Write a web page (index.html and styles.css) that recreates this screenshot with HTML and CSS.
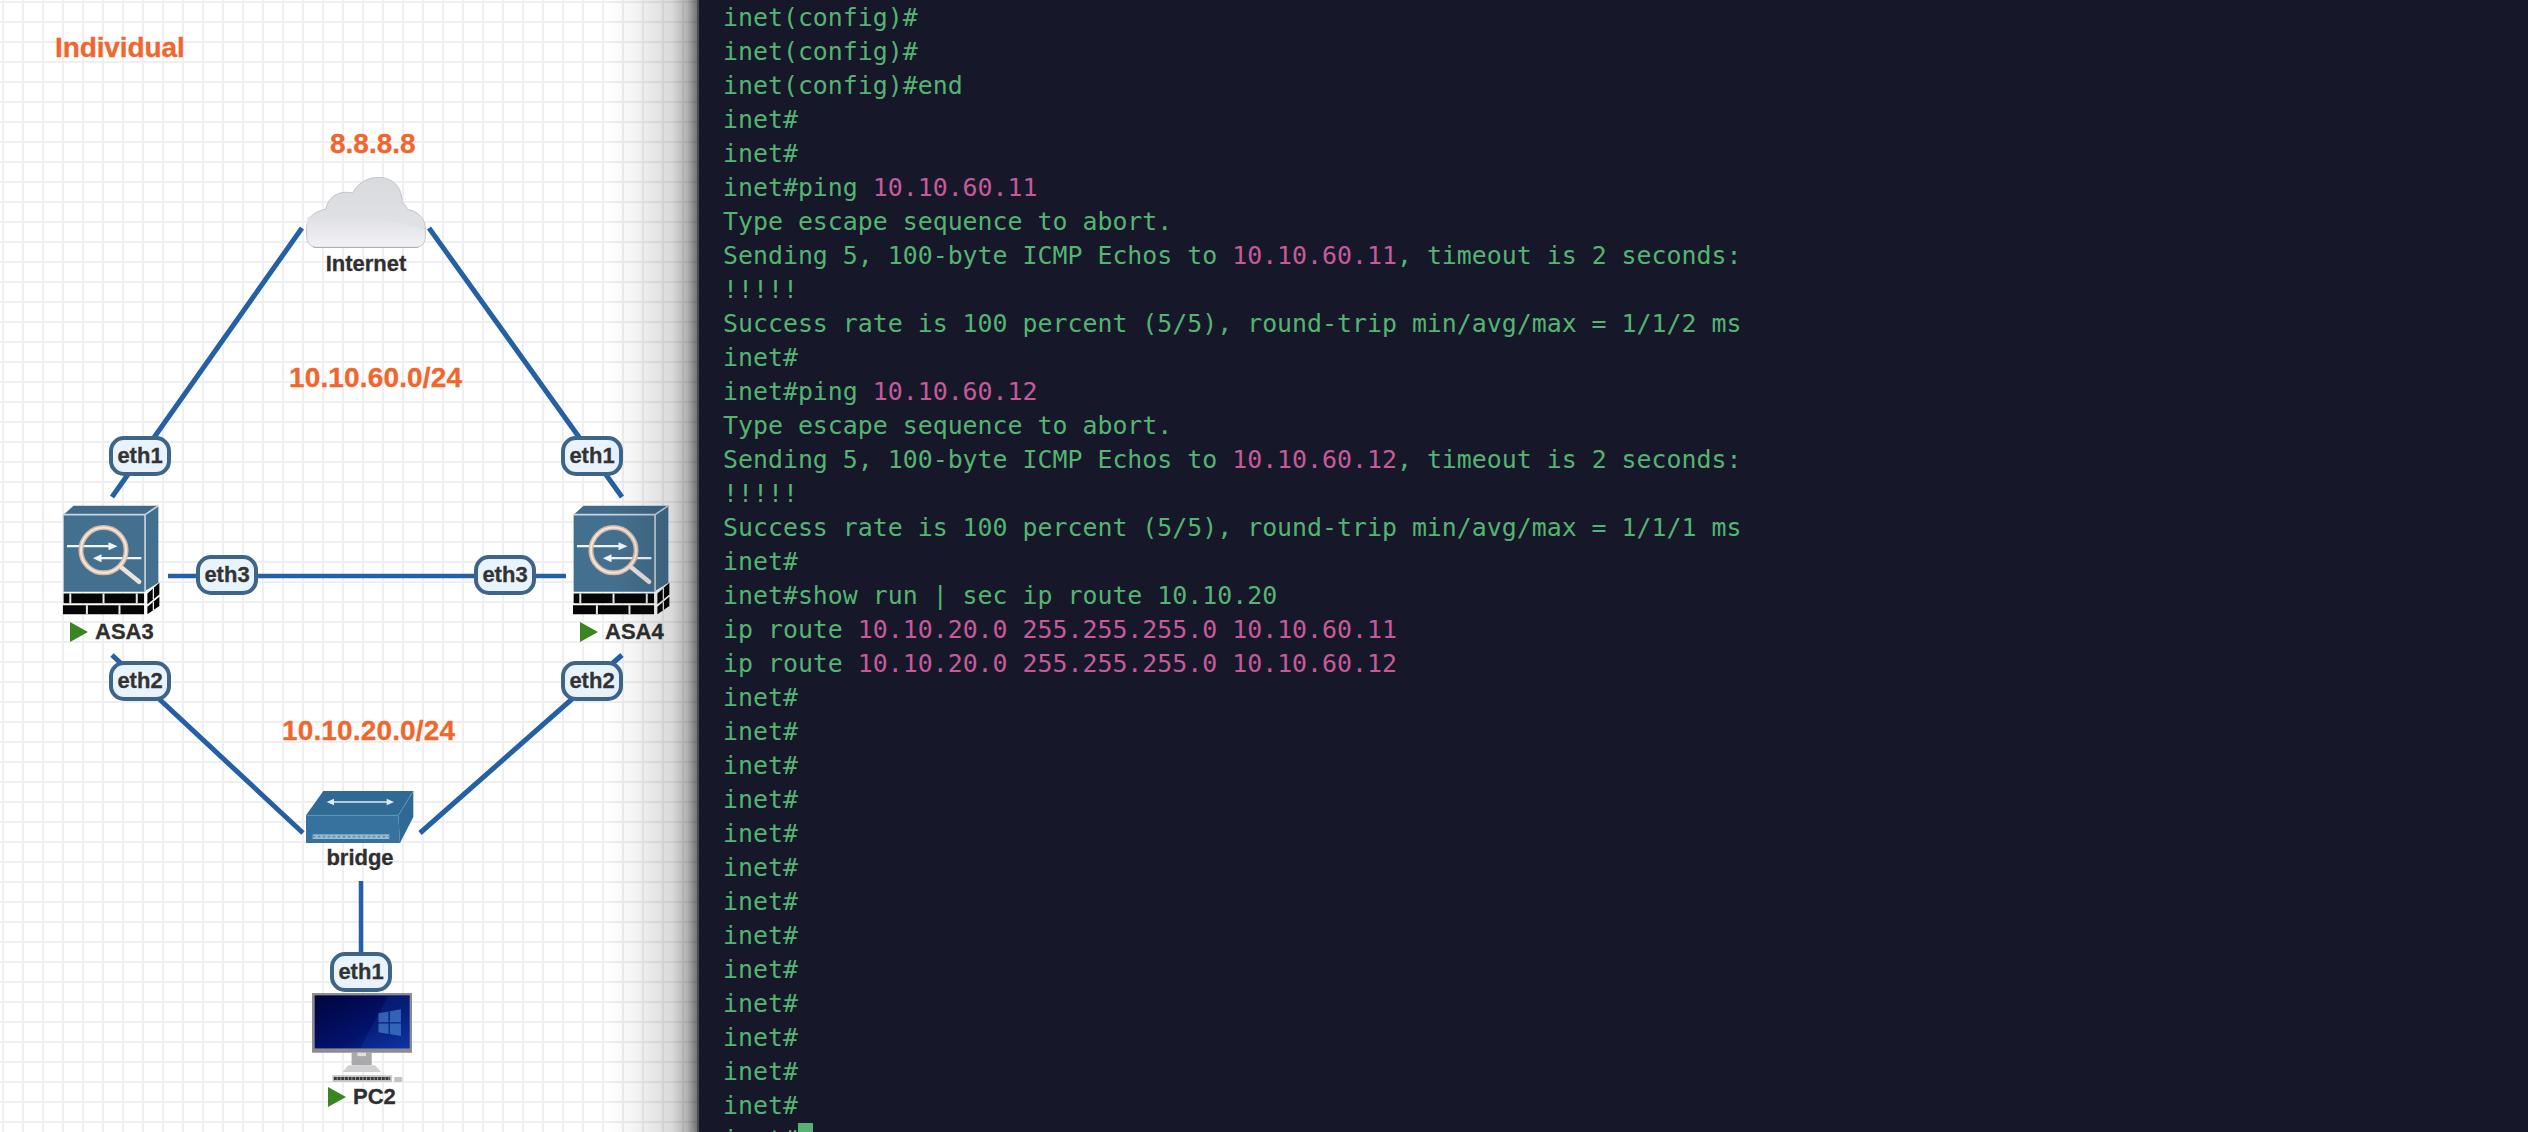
FILE: index.html
```html
<!DOCTYPE html>
<html lang="en">
<head>
<meta charset="utf-8">
<title>Individual</title>
<link rel="stylesheet" href="styles.css">
</head>
<body>
<main class="workspace">
  <section class="canvas">
    <svg class="defs" width="0" height="0" aria-hidden="true">
      <defs>
        <linearGradient id="cloudTop" x1="0" y1="0" x2="0" y2="1">
          <stop offset="0" stop-color="#d9dadd"/>
          <stop offset="1" stop-color="#e4e5e8"/>
        </linearGradient>
        <linearGradient id="cloudLow" x1="0" y1="0" x2="0" y2="1">
          <stop offset="0" stop-color="#dfe0e4"/>
          <stop offset="1" stop-color="#f2f2f5"/>
        </linearGradient>
        <linearGradient id="screen" x1="0" y1="0" x2="1" y2="1">
          <stop offset="0" stop-color="#01043c"/>
          <stop offset=".6" stop-color="#02126c"/>
          <stop offset="1" stop-color="#0a2f9e"/>
        </linearGradient>
        <symbol id="asa" viewBox="60 250 305 340">
          <path d="M70 285 100 258H355L315 285Z" fill="#3f6a8a"/>
          <path d="M315 285 355 258V490L315 515Z" fill="#44708f"/>
          <rect x="70" y="285" width="245" height="232" fill="#44708f"/>
          <path d="M70 285H315V517M315 285 355 258" fill="none" stroke="#c9d6df" stroke-width="5"/>
          <path d="M80 380H215" stroke="#f2f5f7" stroke-width="7"/>
          <path d="M205 368 232 380 205 392Z" fill="#f2f5f7"/>
          <path d="M170 416H304" stroke="#f2f5f7" stroke-width="7"/>
          <path d="M184 404 158 416 184 428Z" fill="#f2f5f7"/>
          <circle cx="190" cy="392" r="68" fill="none" stroke="#d8b9a5" stroke-width="15"/>
          <circle cx="190" cy="392" r="68" fill="none" stroke="#f3e8df" stroke-width="6"/>
          <path d="M245 445 297 487" stroke="#e9e4de" stroke-width="14" stroke-linecap="round"/>
          <path d="M70 522H312V552H70ZM68 558H312V585H68Z" fill="#050505"/>
          <path d="M90 522V552M190 522V552M290 522V552M140 558V585M238 558V585" stroke="#e8e8e8" stroke-width="6"/>
          <path d="M322 522 358 490V525L322 555ZM322 562 358 532V560L322 585Z" fill="#050505"/>
          <path d="M340 505V540M340 548V572" stroke="#e8e8e8" stroke-width="4"/>
        </symbol>
      </defs>
    </svg>

    <svg class="links" viewBox="0 0 697 1132" aria-hidden="true">
      <path d="M302 228 112 497M429 228 622 497M112 655 303 833M622 655 420 833"/>
      <path class="thin" d="M168 576H566M361 881V952"/>
    </svg>

    <h2 class="note note-title">Individual</h2>
    <p class="note note-dns">8.8.8.8</p>
    <p class="note note-upper">10.10.60.0/24</p>
    <p class="note note-lower">10.10.20.0/24</p>

    <div class="node node-cloud">
      <svg class="icon icon-cloud" viewBox="48 52 360 213" aria-hidden="true">
        <path fill="url(#cloudTop)" stroke="#c3c4cb" stroke-width="3" d="M50 205C50 175 68 158 108 148C112 118 140 90 188 100C205 65 240 53 268 53C310 55 338 85 336 130C345 132 350 142 352 150C372 150 406 170 406 205V232C406 252 392 264 372 264H86C62 264 50 250 50 228Z"/>
        <path fill="url(#cloudLow)" d="M52 172C150 160 300 175 404 212V232C404 250 392 262 372 262H86C64 262 52 250 52 228Z"/>
        <path fill="none" stroke="#a9a9b6" stroke-width="3" d="M70 263H385"/>
      </svg>
      <span class="node-name">Internet</span>
    </div>

    <div class="node node-asa3">
      <svg class="icon icon-asa"><use href="#asa"/></svg>
    </div>
    <div class="node-name node-name-row name-asa3"><i class="status"></i>ASA3</div>

    <div class="node node-asa4">
      <svg class="icon icon-asa"><use href="#asa"/></svg>
    </div>
    <div class="node-name node-name-row name-asa4"><i class="status"></i>ASA4</div>

    <div class="node node-bridge">
      <svg class="icon icon-bridge" viewBox="105 90 330 160" aria-hidden="true">
        <path d="M160 92H430L385 165H108Z" fill="#2f6a94"/>
        <path d="M108 165H385L390 248H108Z" fill="#37729e"/>
        <path d="M385 165 430 92V170L390 248Z" fill="#2f6a94"/>
        <path d="M108 165H385L430 92" fill="none" stroke="#5e93b8" stroke-width="3"/>
        <path d="M190 125H352" stroke="#dfeaf1" stroke-width="5"/>
        <path d="M192 115 170 125 192 135ZM350 115 372 125 350 135Z" fill="#dfeaf1"/>
        <rect x="128" y="222" width="230" height="14" fill="#9dbcd0"/>
        <path d="M128 229H358" stroke="#5d90b3" stroke-width="5" stroke-dasharray="8 7"/>
      </svg>
      <span class="node-name">bridge</span>
    </div>

    <div class="node node-pc">
      <svg class="icon icon-pc" viewBox="97 190 298 268" aria-hidden="true">
        <rect x="97" y="190" width="298" height="178" fill="#8d8d90"/>
        <rect x="105" y="197" width="283" height="158" fill="url(#screen)"/>
        <path d="M240 355 325 197H388V355Z" fill="#1b4fc0" opacity=".2"/>
        <path d="M295 250 325 245V277H295ZM329 244 362 238V277H329ZM295 281H325V312L295 307ZM329 281H362V318L329 312Z" fill="#4f8fd8" opacity=".6"/>
        <path d="M215 368H275V405H215Z" fill="#a9a9ab"/>
        <path d="M232 368H258V378H232Z" fill="#e0e0e0"/>
        <path d="M205 405H285L303 425H188Z" fill="#d0d0d2"/>
        <rect x="158" y="435" width="177" height="20" fill="#c5c5c7"/>
        <path d="M162 445H330" stroke="#3a3a3a" stroke-width="9" stroke-dasharray="9 2"/>
        <rect x="342" y="440" width="24" height="15" rx="4" fill="#c2c2c4"/>
      </svg>
    </div>
    <div class="node-name node-name-row name-pc"><i class="status"></i>PC2</div>

    <span class="port port-a1">eth1</span>
    <span class="port port-a3">eth3</span>
    <span class="port port-a2">eth2</span>
    <span class="port port-b1">eth1</span>
    <span class="port port-b3">eth3</span>
    <span class="port port-b2">eth2</span>
    <span class="port port-pc">eth1</span>
  </section>

  <section class="terminal">
    <div class="line">inet(config)#</div>
    <div class="line">inet(config)#</div>
    <div class="line">inet(config)#end</div>
    <div class="line">inet#</div>
    <div class="line">inet#</div>
    <div class="line"><span>inet#ping </span><b>10.10.60.11</b></div>
    <div class="line">Type escape sequence to abort.</div>
    <div class="line"><span>Sending 5, 100-byte ICMP Echos to </span><b>10.10.60.11</b><span>, timeout is 2 seconds:</span></div>
    <div class="line">!!!!!</div>
    <div class="line">Success rate is 100 percent (5/5), round-trip min/avg/max = 1/1/2 ms</div>
    <div class="line">inet#</div>
    <div class="line"><span>inet#ping </span><b>10.10.60.12</b></div>
    <div class="line">Type escape sequence to abort.</div>
    <div class="line"><span>Sending 5, 100-byte ICMP Echos to </span><b>10.10.60.12</b><span>, timeout is 2 seconds:</span></div>
    <div class="line">!!!!!</div>
    <div class="line">Success rate is 100 percent (5/5), round-trip min/avg/max = 1/1/1 ms</div>
    <div class="line">inet#</div>
    <div class="line">inet#show run | sec ip route 10.10.20</div>
    <div class="line"><span>ip route </span><b>10.10.20.0 255.255.255.0 10.10.60.11</b></div>
    <div class="line"><span>ip route </span><b>10.10.20.0 255.255.255.0 10.10.60.12</b></div>
    <div class="line">inet#</div>
    <div class="line">inet#</div>
    <div class="line">inet#</div>
    <div class="line">inet#</div>
    <div class="line">inet#</div>
    <div class="line">inet#</div>
    <div class="line">inet#</div>
    <div class="line">inet#</div>
    <div class="line">inet#</div>
    <div class="line">inet#</div>
    <div class="line">inet#</div>
    <div class="line">inet#</div>
    <div class="line">inet#</div>
    <div class="line"><span>inet#</span><i class="cursor"></i></div>
  </section>
</main>
</body>
</html>
```

FILE: styles.css
```css
* { box-sizing: border-box; }

html, body {
  margin: 0;
  height: 100%;
  overflow: hidden;
}

.workspace {
  display: flex;
  height: 1132px;
  overflow: hidden;
}

/* diagram canvas */
.canvas {
  position: relative;
  flex: 0 0 697px;
  background-color: #fff;
  background-image:
    linear-gradient(#efeff2 0 2px, transparent 2px),
    linear-gradient(90deg, #efeff2 0 2px, transparent 2px);
  background-size: 20px 20px;
  background-position: 2px 1px;
  font-family: "Liberation Sans", Arial, sans-serif;
}

.canvas::after {
  content: "";
  position: absolute;
  top: 0;
  right: 0;
  bottom: 0;
  width: 90px;
  background: linear-gradient(90deg,
    rgba(0, 0, 0, 0) 0,
    rgba(0, 0, 0, .04) 25px,
    rgba(0, 0, 0, .09) 45px,
    rgba(0, 0, 0, .15) 65px,
    rgba(0, 0, 0, .3) 80px,
    rgba(0, 0, 0, .55) 90px);
}

.defs { position: absolute; }

.links {
  position: absolute;
  inset: 0;
  width: 697px;
  height: 1132px;
  fill: none;
  stroke: #2560a4;
  stroke-width: 5;
}

.links .thin { stroke-width: 4.5; }

.note {
  position: absolute;
  margin: 0;
  color: #f0662c;
  font-weight: 700;
  font-size: 28px;
  line-height: 30px;
  white-space: nowrap;
  -webkit-text-stroke: .3px currentColor;
}

.note-title { left: 55px; top: 33px; letter-spacing: -.1px; }
.note-dns { left: 330px; top: 129px; }
.note-upper { left: 289px; top: 363px; letter-spacing: .15px; }
.note-lower { left: 282px; top: 716px; letter-spacing: .15px; }

.node {
  position: absolute;
  display: flex;
  flex-direction: column;
  align-items: center;
}

.icon { display: block; flex: none; width: 100%; }
.icon-cloud { height: 71px; }
.icon-asa { height: 113px; }
.icon-bridge { height: 54px; }
.icon-pc { height: 90px; }

.node-cloud { left: 306px; top: 177px; width: 120px; }
.node-asa3 { left: 60px; top: 503px; width: 102px; }
.node-asa4 { left: 570px; top: 503px; width: 102px; }
.node-bridge { left: 305px; top: 790px; width: 110px; }
.node-pc { left: 312px; top: 993px; width: 100px; }

.node-name {
  color: #2f2f2f;
  font-weight: 700;
  font-size: 22px;
  line-height: 26px;
  white-space: nowrap;
  -webkit-text-stroke: .3px currentColor;
}

.node-cloud .node-name { margin-top: 3px; }
.node-bridge .node-name { margin-top: 1px; }

.node-name-row {
  position: absolute;
  display: flex;
  align-items: center;
  gap: 7px;
}

.name-asa3 { left: 70px; top: 619px; }
.name-asa4 { left: 580px; top: 619px; }
.name-pc { left: 328px; top: 1084px; }

.status {
  display: block;
  width: 18px;
  height: 20px;
  background: #3a8522;
  clip-path: polygon(0 0, 100% 50%, 0 100%);
}

.port {
  position: absolute;
  width: 62px;
  height: 40px;
  display: flex;
  align-items: center;
  justify-content: center;
  border: 4px solid #3e6589;
  border-radius: 15px;
  background: #e8f3fd;
  color: #333;
  font-weight: 700;
  font-size: 22px;
  line-height: 1;
  -webkit-text-stroke: .3px currentColor;
}

.port-a1 { left: 109px; top: 436px; }
.port-a3 { left: 196px; top: 555px; }
.port-a2 { left: 109px; top: 661px; }
.port-b1 { left: 561px; top: 436px; }
.port-b3 { left: 474px; top: 555px; }
.port-b2 { left: 561px; top: 661px; }
.port-pc { left: 330px; top: 952px; }

/* terminal */
.terminal {
  flex: 1;
  min-width: 0;
  background: #161829;
  border-left: 2px solid #4a4c58;
  padding: 1px 0 0 24px;
  color: #55b472;
  font-family: "DejaVu Sans Mono", monospace;
  font-size: 24.88px;
}

.line {
  height: 34px;
  line-height: 34px;
  white-space: pre;
}

.line b {
  color: #c75a9b;
  font-weight: 400;
}

.cursor {
  display: inline-block;
  width: 15px;
  height: 34px;
  background: #55b472;
  vertical-align: top;
}
```
